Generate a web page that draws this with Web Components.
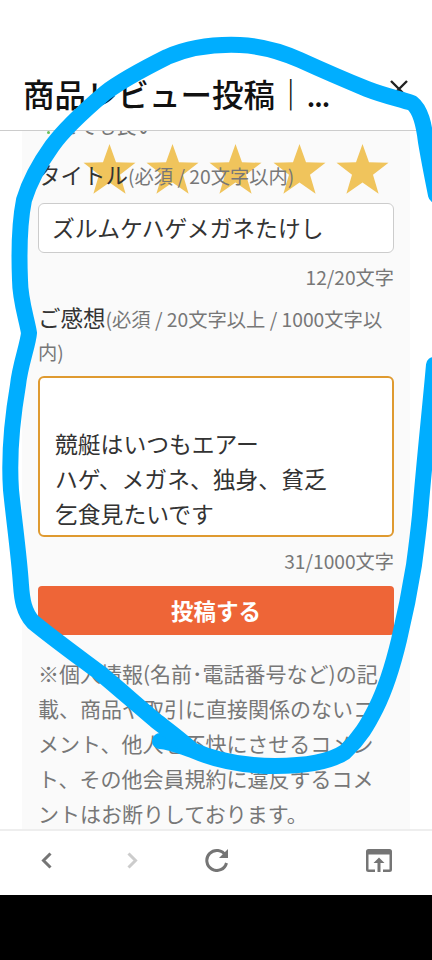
<!DOCTYPE html>
<html lang="ja">
<head>
<meta charset="utf-8">
<title>商品レビュー投稿</title>
<style>
  html, body { margin: 0; height: 100%; background: #fff; }
  body { font-family: "Noto Sans CJK JP", "Noto Sans", sans-serif; overflow: hidden; }
</style>
</head>
<body>
<review-app>
  <review-header slot="header">商品レビュー投稿｜<span style="letter-spacing:-1.5px;font-size:30px">...</span></review-header>
  <review-panel slot="main">
    <star-rating slot="stars"></star-rating>
    <form-field slot="title" count="12/20文字" hint="(必須 / 20文字以内)" label="タイトル">ズルムケハゲメガネたけし</form-field>
    <form-field slot="comment" count="31/1000文字" hint="(必須 / 20文字以上 / 1000文字以内)" label="ご感想" multiline><br>競艇はいつもエアー<br>ハゲ、メガネ、独身、貧乏<br>乞食見たいです</form-field>
  </review-panel>
  <browser-bar slot="bar"></browser-bar>
</review-app>

<script>
class ReviewApp extends HTMLElement {
  constructor() {
    super();
    this.attachShadow({ mode: 'open' });
    this.shadowRoot.innerHTML = `
      <style>
        :host { display: flex; flex-direction: column; position: relative; height: 960px; overflow: hidden; }
        .main { flex: 1; min-height: 0; overflow: hidden; }
        .black { height: 65px; background: #000; flex: none; }
        svg { position: absolute; left: 0; top: 0; pointer-events: none; }
      </style>
      <slot name="header"></slot>
      <div class="main"><slot name="main"></slot></div>
      <slot name="bar"></slot>
      <div class="black"></div>
      <svg width="432" height="960" viewBox="0 0 432 960" fill="none">
        <path d="M160 741 C172 742 180 746 192 750 C215 760 245 766 275 766 C305 766 330 762 345 752 C360 738 368 724 376 708 C386 688 393 665 399 640 C405 615 410 590 414 565 C416 550 418 535 420 515 C424 465 430 410 434 365"
          stroke="#00aeff" stroke-width="16" stroke-linecap="round" stroke-linejoin="round"/>
        <path d="M190 748 C175 735 165 728 155 720 C135 703 118 688 100 673 C80 658 55 640 33 622 C24 612 22 600 21 585 C19 555 14 520 11 490 C9 460 12 420 18 385 C20 365 28 345 29 333 C27 320 20 300 20 280 C19 255 19 225 24 200 C30 180 42 160 52 146 C65 128 85 110 105 93 C122 80 145 68 167 57 C190 47 215 44 240 45 C262 46 282 52 300 60 C322 70 345 80 367 89 C385 96 400 99 412 103 C421 110 424 125 426 142 C429 160 432 175 436 195"
          stroke="#00aeff" stroke-width="16" stroke-linecap="round" stroke-linejoin="round"/>
      </svg>
    `;
  }
}

class ReviewHeader extends HTMLElement {
  constructor() {
    super();
    this.attachShadow({ mode: 'open' });
    this.shadowRoot.innerHTML = `
      <style>
        :host { display: flex; align-items: center; justify-content: space-between; box-sizing: border-box;
          height: 131px; padding: 58px 24px 0 23px; background: #fff; border-bottom: 1px solid #ccc; flex: none; }
        .title { font-size: 31.5px; font-weight: 500; color: #111; white-space: nowrap; line-height: 1.2; }
        svg { display: block; margin-top: -10px; }
      </style>
      <div class="title"><slot></slot></div>
      <svg width="18" height="18" viewBox="0 0 18 18"><path d="M1 1 L17 17 M17 1 L1 17" stroke="#222" stroke-width="2.4"/></svg>
    `;
  }
}

class ReviewPanel extends HTMLElement {
  constructor() {
    super();
    this.attachShadow({ mode: 'open' });
    this.shadowRoot.innerHTML = `
      <style>
        :host { display: block; position: relative; box-sizing: border-box; height: 100%; margin: 0 22px;
          padding: 0 16px; background: #fafafa; color: #777; overflow: hidden; }
        .cut { height: 24px; margin-top: -17px; font-size: 20px; line-height: 24px; color: #777; padding-left: 20px; position: relative; }
        .cut i { position: absolute; left: 9px; top: 17px; width: 3px; height: 3px; border-radius: 50%; background: #6bbf59; }
        .note { margin: 21px 0 0; font-size: 21px; line-height: 35px; color: #777; }
        button { display: block; width: 100%; height: 49px; margin: 0; padding: 0 0 2px; border: 0; border-radius: 4px;
          background: #ee6537; color: #fff; font: 700 22.5px "Noto Sans CJK JP", sans-serif; }
      </style>
      <div class="cut"><i></i>とても良い</div>
      <slot name="stars"></slot>
      <slot name="title"></slot>
      <slot name="comment"></slot>
      <button>投稿する</button>
      <p class="note">※個人情報(名前･電話番号など)の記載、商品や取引に直接関係のないコメント、他人を不快にさせるコメント、その他会員規約に違反するコメントはお断りしております。</p>
    `;
  }
}

class StarRating extends HTMLElement {
  constructor() {
    super();
    this.attachShadow({ mode: 'open' });
    const star = `<svg width="53" height="50" viewBox="0 0 53 50"><path d="M26.5 0 L33 18.3 L52.5 18.8 L37 30.8 L42.6 49.8 L26.5 38.6 L10.4 49.8 L16 30.8 L.5 18.8 L20 18.3 Z" fill="#f0c45c"/></svg>`;
    this.shadowRoot.innerHTML = `
      <style>
        :host { display: flex; gap: 10.2px; position: absolute; left: 61px; top: 13px; }
        svg { display: block; }
      </style>
      ${star.repeat(5)}
    `;
  }
}

class FormField extends HTMLElement {
  constructor() {
    super();
    this.attachShadow({ mode: 'open' });
    const multi = this.hasAttribute('multiline');
    this.shadowRoot.innerHTML = `
      <style>
        :host { display: block; position: relative; margin-top: ${multi ? '10px' : '20px'}; margin-bottom: ${multi ? '11px' : '0'}; }
        .label { font-size: 19.3px; line-height: 33px; color: #777; }
        .label b { font-weight: 400; font-size: 22.5px; color: #333; }
        .box { box-sizing: border-box; background: #fff; font-size: 22.8px; color: #333; white-space: nowrap; }
        .single { height: 50px; margin-top: 10px; padding: 0 13px; line-height: 48px; border: 1px solid #ccc; border-radius: 6px; }
        .multi { height: 161px; margin-top: 7px; padding: 13px 15px 0; line-height: 35px; border: 2.5px solid #df9a30; border-radius: 6px; overflow: hidden; }
        .count { font-size: 19.2px; line-height: 28px; margin-top: 10px; text-align: right; color: #777; }
      </style>
      <div class="label"><b>${this.getAttribute('label')}</b>${this.getAttribute('hint')}</div>
      <div class="box ${multi ? 'multi' : 'single'}"><slot></slot></div>
      <div class="count">${this.getAttribute('count')}</div>
    `;
  }
}

class BrowserBar extends HTMLElement {
  constructor() {
    super();
    this.attachShadow({ mode: 'open' });
    this.shadowRoot.innerHTML = `
      <style>
        :host { display: flex; align-items: center; justify-content: space-between; box-sizing: border-box; flex: none;
          height: 66px; padding: 0 40px 6px 41px; background: #fff; border-top: 2px solid #eee; }
        svg { display: block; }
        .nav { display: flex; align-items: center; }
        .fwd { margin: 0 67px 0 75px; }
      </style>
      <div class="nav">
        <svg width="11" height="17" viewBox="0 0 11 17"><path d="M9.5 1.5 L2.5 8.5 L9.5 15.5" fill="none" stroke="#757575" stroke-width="3"/></svg>
        <svg class="fwd" width="11" height="17" viewBox="0 0 11 17"><path d="M1.5 1.5 L8.5 8.5 L1.5 15.5" fill="none" stroke="#ccc" stroke-width="3"/></svg>
        <svg width="24" height="24" viewBox="0 0 24 24"><path d="M20.5 7.5 A10 10 0 1 0 21.5 15" fill="none" stroke="#757575" stroke-width="3"/><path d="M23 1 V10 H14 Z" fill="#757575"/></svg>
      </div>
      <svg width="26" height="23" viewBox="0 0 26 23"><path d="M2.5 0 H23.5 A2.5 2.5 0 0 1 26 2.5 V20.5 A2.5 2.5 0 0 1 23.5 23 H17 V20.5 H23.5 V5.5 H2.5 V20.5 H9 V23 H2.5 A2.5 2.5 0 0 1 0 20.5 V2.5 A2.5 2.5 0 0 1 2.5 0 Z" fill="#757575"/><path d="M13 8.5 L18.5 14 H14.5 V23 H11.5 V14 H7.5 Z" fill="#757575"/></svg>
    `;
  }
}

customElements.define('review-app', ReviewApp);
customElements.define('review-header', ReviewHeader);
customElements.define('review-panel', ReviewPanel);
customElements.define('star-rating', StarRating);
customElements.define('form-field', FormField);
customElements.define('browser-bar', BrowserBar);
</script>
</body>
</html>
